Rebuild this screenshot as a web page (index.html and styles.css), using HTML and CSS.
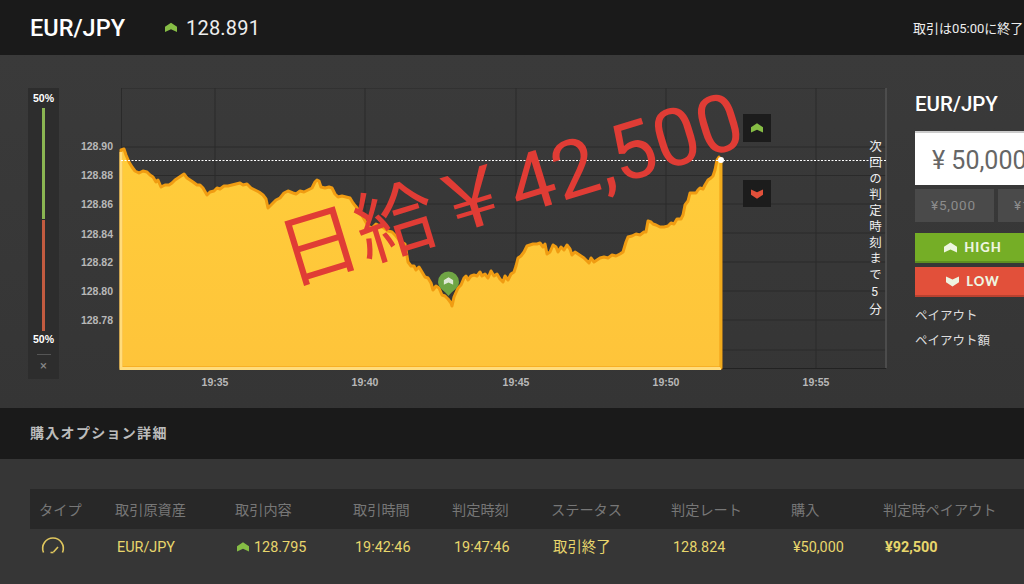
FILE: index.html
```html
<!DOCTYPE html>
<html lang="ja">
<head>
    <meta charset="UTF-8">
    <meta name="viewport" content="width=device-width, initial-scale=1.0">
    <title>EUR/JPY</title>
    <link rel="stylesheet" href="styles.css">
</head>
<body>
    <svg class="defs" width="0" height="0">
        <symbol id="up" viewBox="0 0 12 10"><path d="M0 4.2 6 .3 12 4.200V9.600L6 6.800 0 9.600Z"/></symbol>
        <symbol id="down" viewBox="0 0 12 10"><path d="M0 .4 6 3.200 12 .4V5.800L6 9.700 0 5.800Z"/></symbol>
    </svg>

    <header class="topbar">
        <div class="top-left">
            <span class="pair">EUR/JPY</span>
            <svg class="icon-up top-arrow"><use href="#up"/></svg>
            <span class="rate">128.891</span>
        </div>
        <span class="expiry">取引は05:00に終了します</span>
    </header>

    <section class="trade">
        <div class="sentiment">
            <span class="pct">50%</span>
            <div class="bar-green"></div>
            <div class="bar-red"></div>
            <span class="pct">50%</span>
            <div class="sent-line"></div>
            <span class="sent-close">×</span>
        </div>

        <div class="chart">
            <svg class="chart-svg" width="830" height="310" viewBox="70 88 830 310">
                <defs>
                    <linearGradient id="fill" x1="0" y1="0" x2="0" y2="1">
                        <stop offset="0" stop-color="#ffcd3a"/>
                        <stop offset="1" stop-color="#fec43a"/>
                    </linearGradient>
                </defs>
                <g class="grid">
                    <path d="M121 88H886M121 147H886M121 175.500H886M121 204H886M121 233H886M121 262H886M121 291H886M121 320H886M121 350H886"/>
                    <path d="M121.500 88V368M215 88V368M365 88V368M516 88V368M666 88V368M816 88V368"/>
                </g>
                <path class="axis-right" d="M886 88V368"/>
                <path class="axis-bottom" d="M121 368.500H886"/>
                <path class="area" d="M121 368V150L124 149 126 155 129 162 132 167 135 171 139 173 143 171 147 172 150 175 153 177 156 182 158 180 161 187 165 185 169 185 172 183 175 180 178 178 181 176 184 174 187 178 190 180 193 182 197 185 200 185 203 188 207 195 210 192 214 191 217 188 220 189 224 186 228 186 232 185 236 184 240 183 243 185 247 184 251 188 255 190 259 192 263 195 266 199 268 208 272 204 276 200 280 198 284 193 288 191 293 193 296 194 300 191 304 192 308 190 312 188 315 182 317 180 319 181 321 187 325 188 329 187 332 188 335 194 338 197 342 196 346 197 350 198 353 203 357 208 360 212 364 219 368 226 372 228 376 224 380 226 384 228 388 231 392 232 396 236 400 241 405 244 408 262 411 266 414 266 416 270 419 267 422 272 425 277 428 278 431 283 433 290 436 286 439 288 442 295 445 296 448 299 451 303 452 306 454 297 458 288 461 285 464 278 466 276 468 280 471 276 474 275 477 276 480 272 482 276 485 274 488 278 491 271 494 276 497 274 500 279 503 282 505 276 508 280 511 274 514 272 516 266 518 258 521 256 524 252 527 246 530 245 533 244 537 244 540 243 543 247 545 244 547 254 550 252 553 245 556 247 558 252 561 247 564 250 567 245 570 249 572 255 575 252 578 254 581 256 584 258 587 261 589 263 591 258 594 262 597 260 600 258 604 257 608 258 612 255 616 256 620 254 623 252 626 242 628 237 632 236 636 234 640 235 644 232 646 232 648 221 651 222 653 224 656 225 660 227 664 227 668 226 671 223 674 224 677 219 681 219 683 215 685 205 688 201 690 193 693 193 696 193 698 190 700 188 703 189 705 185 708 180 711 178 713 176 715 170 717 160 719 157 721 160V368Z"/>
                <path class="edge" d="M121 152V368.500H721"/>
                <path class="right-edge" d="M721 160V368"/>
                <path class="price-line" d="M121 160.500H886"/>
                <circle class="dot" cx="721" cy="160" r="3"/>

                <g class="y-labels">
                    <text x="113" y="150">128.90</text>
                    <text x="113" y="179">128.88</text>
                    <text x="113" y="208">128.86</text>
                    <text x="113" y="238">128.84</text>
                    <text x="113" y="266">128.82</text>
                    <text x="113" y="295">128.80</text>
                    <text x="113" y="324">128.78</text>
                </g>
                <g class="x-labels">
                    <text x="215" y="386">19:35</text>
                    <text x="365" y="386">19:40</text>
                    <text x="516" y="386">19:45</text>
                    <text x="666" y="386">19:50</text>
                    <text x="816" y="386">19:55</text>
                </g>

                <path class="pin" d="M448.500 296C445 291 438 288 438 282A10.500 10.500 0 0 1 459 282C459 288 452 291 448.500 296Z"/>
                <use class="pin-arrow" href="#up" x="443.500" y="277" width="10" height="8"/>

                <rect class="bet-box" x="743" y="114" width="28" height="28"/>
                <use class="arrow-up" href="#up" x="751" y="123" width="12" height="10"/>
                <rect class="bet-box" x="743" y="180" width="28" height="27"/>
                <use class="arrow-down" href="#down" x="751" y="189" width="12" height="10"/>
            </svg>
            <div class="next-time">次回の判定時刻まで5分</div>
            <div class="stamp">日給￥42,500</div>
        </div>

        <aside class="side">
            <h2 class="side-pair">EUR/JPY</h2>
            <div class="amount">¥ 50,000</div>
            <div class="chips">
                <span class="chip">¥5,000</span>
                <span class="chip">¥10,000</span>
            </div>
            <button class="btn btn-high"><svg class="btn-icon"><use href="#up"/></svg>HIGH</button>
            <button class="btn btn-low"><svg class="btn-icon"><use href="#down"/></svg>LOW</button>
            <p class="payout">ペイアウト</p>
            <p class="payout">ペイアウト額</p>
        </aside>
    </section>

    <div class="section-head">購入オプション詳細</div>

    <section class="details">
        <div class="row row-head">
            <span>タイプ</span>
            <span>取引原資産</span>
            <span>取引内容</span>
            <span>取引時間</span>
            <span>判定時刻</span>
            <span>ステータス</span>
            <span>判定レート</span>
            <span>購入</span>
            <span>判定時ペイアウト</span>
        </div>
        <div class="row row-body">
            <span>
                <svg class="gauge" width="26" height="18" viewBox="0 0 26 18">
                    <path d="M3.500 16.500C.5 9 6 2 13 2S25.500 9 22.500 16.500"/>
                    <path d="M13.500 16 18 11"/>
                    <path d="M10.500 16.500H13.500"/>
                </svg>
            </span>
            <span>EUR/JPY</span>
            <span class="with-arrow"><svg class="icon-up row-arrow"><use href="#up"/></svg>128.795</span>
            <span>19:42:46</span>
            <span>19:47:46</span>
            <span class="status">取引終了</span>
            <span>128.824</span>
            <span>¥50,000</span>
            <span class="total">¥92,500</span>
        </div>
    </section>
</body>
</html>
```

FILE: styles.css
```css
/* Dark trading page */
* {
    box-sizing: border-box;
}

body {
    margin: 0;
    width: 1024px;
    height: 584px;
    overflow: hidden;
    background-color: #363636;
    color: #fff;
    font-family: Roboto, "Noto Sans CJK JP", sans-serif;
}

.defs {
    display: block;
    height: 0;
}

.topbar {
    height: 55px;
    padding-left: 30px;
    display: flex;
    align-items: center;
    background-color: #1a1a1a;
    white-space: nowrap;
}

.top-left {
    width: 883px;
    flex-shrink: 0;
    display: flex;
    align-items: center;
}

.pair {
    font-size: 23.500px;
    font-weight: 500;
    width: 135px;
}

.icon-up {
    fill: #86bd45;
}

.top-arrow {
    width: 12px;
    height: 11px;
    margin-right: 9px;
}

.rate {
    font-size: 20px;
    color: #eee;
    letter-spacing: 0.2px;
}

.expiry {
    font-size: 13px;
    color: #eee;
    flex-shrink: 0;
}

.trade {
    height: 353px;
    padding: 33px 0 0 28px;
    display: flex;
    align-items: flex-start;
    background: linear-gradient(#3a3a3a, #353535);
}

.sentiment {
    width: 31px;
    height: 291px;
    padding-top: 4px;
    display: flex;
    flex-direction: column;
    align-items: center;
    flex-shrink: 0;
    background-color: #2d2d2d;
}

.pct {
    font-family: "Liberation Sans", sans-serif;
    font-size: 10.500px;
    font-weight: bold;
    line-height: 13px;
}

.bar-green {
    width: 3px;
    height: 111px;
    margin-top: 3px;
    background-color: #8ab552;
}

.bar-red {
    width: 3px;
    height: 111px;
    margin-top: 1px;
    margin-bottom: 2px;
    background-color: #c25b40;
}

.sent-line {
    width: 14px;
    height: 1px;
    margin-top: 8px;
    background-color: #555;
}

.sent-close {
    margin-top: 3px;
    font-size: 13px;
    line-height: 16px;
    color: #888;
}

.chart {
    position: relative;
    width: 830px;
    height: 310px;
    margin-left: 11px;
    flex-shrink: 0;
}

.chart-svg {
    display: block;
}

.grid path {
    fill: none;
    stroke: #2a2a2a;
    stroke-width: 1;
}

.axis-right {
    stroke: #555;
    stroke-width: 1.500;
}

.axis-bottom {
    stroke: #222;
}

.area {
    fill: url(#fill);
    stroke: #f09c12;
    stroke-width: 3;
    stroke-linejoin: round;
}

.edge {
    fill: none;
    stroke: #ffdc7c;
    stroke-width: 3;
}

.right-edge {
    stroke: #f2b021;
    stroke-width: 1.500;
}

.price-line {
    stroke: #fff;
    stroke-width: 1;
    stroke-dasharray: 2 1.500;
}

.dot {
    fill: #fff;
}

.y-labels text,
.x-labels text {
    font-family: "Liberation Sans", sans-serif;
    font-size: 10.500px;
    font-weight: bold;
    fill: #b8b8b8;
}

.y-labels text {
    text-anchor: end;
}

.x-labels text {
    text-anchor: middle;
}

.pin {
    fill: #6fa544;
}

.pin-arrow {
    fill: #dfe8d4;
}

.bet-box {
    fill: #1c1c1c;
}

.arrow-up {
    fill: #86bd45;
}

.arrow-down {
    fill: #e2503a;
}

.next-time {
    position: absolute;
    left: 796px;
    top: 52px;
    writing-mode: vertical-rl;
    text-orientation: upright;
    font-size: 12.500px;
    line-height: 16px;
    letter-spacing: 3.500px;
    color: #eee;
    white-space: nowrap;
}

.stamp {
    position: absolute;
    left: 211px;
    top: 126px;
    font-family: Roboto, "Noto Sans CJK JP", sans-serif;
    font-size: 80px;
    font-weight: 400;
    line-height: 90px;
    color: #e03c35;
    white-space: nowrap;
    transform: rotate(-17deg);
    transform-origin: left center;
}

.side {
    width: 116px;
    margin-left: 15px;
    flex-shrink: 0;
}

.side-pair {
    margin: 4px 0 15px;
    font-size: 20.500px;
    font-weight: 500;
    line-height: 24px;
}

.amount {
    height: 54px;
    padding-left: 17px;
    background-color: #fff;
    border-top: 2px solid #ccc;
    color: #666;
    font-size: 25px;
    line-height: 56px;
    white-space: nowrap;
}

.chips {
    display: flex;
    gap: 4px;
    margin-top: 4px;
}

.chip {
    width: 79px;
    height: 33px;
    flex-shrink: 0;
    padding-left: 16px;
    background-color: #4a4a4a;
    color: #8c8c8c;
    font-size: 13.500px;
    letter-spacing: 0.800px;
    line-height: 33px;
    white-space: nowrap;
    overflow: hidden;
}

.btn {
    display: flex;
    align-items: center;
    justify-content: center;
    gap: 7px;
    width: 100%;
    height: 30px;
    padding: 0;
    border: 0;
    color: #eef5e0;
    font-family: Lato, sans-serif;
    font-size: 13px;
    font-weight: 900;
    letter-spacing: 1px;
}

.btn-high {
    margin-top: 11px;
    background-color: #75ae26;
    border-bottom: 2px solid #5f8f20;
}

.btn-low {
    margin-top: 4px;
    background-color: #e2503a;
    border-bottom: 2px solid #b9412f;
}

.btn-icon {
    width: 13px;
    height: 11px;
    fill: #eef5e0;
}

.payout {
    margin: 0;
    padding-top: 7px;
    height: 25px;
    font-size: 12.500px;
    line-height: 18px;
    color: #ddd;
}

.btn-low + .payout {
    margin-top: 3px;
}

.section-head {
    height: 51px;
    padding-left: 30px;
    background-color: #1a1a1a;
    color: #bcbcbc;
    font-size: 14px;
    font-weight: 700;
    letter-spacing: 1.300px;
    line-height: 51px;
}

.details {
    padding: 30px 0 0 30px;
}

.row {
    display: grid;
    grid-template-columns: 76px 120px 118px 99px 99px 120px 120px 92px 150px;
    padding-left: 9px;
    white-space: nowrap;
}

.row-head {
    height: 40px;
    align-items: center;
    background-color: #282828;
    color: #777;
    font-size: 14.200px;
}

.row-body {
    height: 36px;
    align-items: center;
    color: #e8d66c;
    font-size: 14.400px;
}

.row-body span {
    padding-left: 2px;
}

.row-body span:first-child {
    padding-left: 0;
}

.row-body .status {
    margin-top: -4px;
}

.with-arrow {
    display: flex;
    align-items: center;
}

.row-arrow {
    width: 12px;
    height: 10px;
    margin-right: 5px;
}

.gauge {
    display: block;
    margin: -4px 0 0 1px;
    fill: none;
    stroke: #e0c75e;
    stroke-width: 1.600;
}

.total {
    font-weight: 700;
}
```
